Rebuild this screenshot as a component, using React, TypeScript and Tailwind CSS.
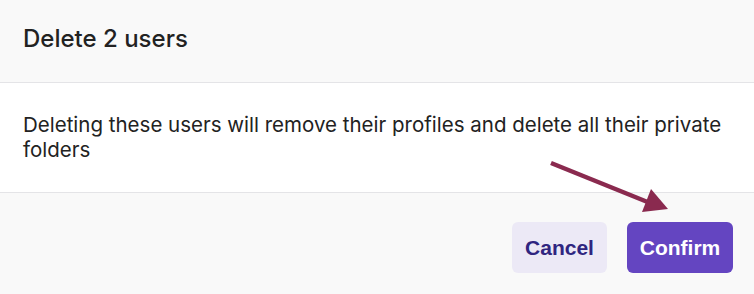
import React from "react";

export default function App() {
  return (
    <div className="w-[754px] h-[294px] flex flex-col bg-white font-['Inter',sans-serif] relative overflow-hidden">
      <div className="h-[83px] shrink-0 bg-[#f9f9f9] border-b border-[#e4e4e7] flex items-center px-[23px]">
        <h1 className="text-[24px] font-medium text-[#222222] leading-none -mt-[5px]">Delete 2 users</h1>
      </div>
      <div className="h-[110px] shrink-0 bg-white border-b border-[#e4e4e7] flex items-center pl-[23px] pr-[12px]">
        <p className="text-[20.5px] leading-[25px] text-[#222222] -mt-[1px]">
          Deleting these users will remove their profiles and delete all their private folders
        </p>
      </div>
      <div className="flex-1 bg-[#f9f9f9] flex justify-end items-start pt-[29px] pr-[21px] gap-[20px]">
        <button className="h-[51px] w-[95px] rounded-[6px] bg-[#ece9f6] text-[#2f2580] text-[21px] font-bold font-['Liberation_Sans',Arial,sans-serif]">
          Cancel
        </button>
        <button className="h-[51px] w-[106px] rounded-[6px] bg-[#6445c1] text-white text-[21px] font-bold font-['Liberation_Sans',Arial,sans-serif]">
          Confirm
        </button>
      </div>
      <svg className="absolute left-0 top-0 pointer-events-none" width="754" height="294" viewBox="0 0 754 294">
        <line x1="551" y1="163" x2="650" y2="203" stroke="#8a2a4f" strokeWidth="4.5" strokeLinecap="butt" />
        <polygon points="668,209 642,212 651,189" fill="#8a2a4f" />
      </svg>
    </div>
  );
}
